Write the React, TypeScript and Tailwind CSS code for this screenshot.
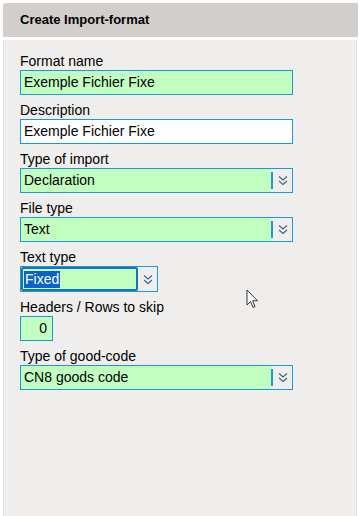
export default function App() {
  return (
    <div className="relative h-[516px] w-[359px] overflow-hidden bg-white font-['Liberation_Sans',Arial,sans-serif] text-[14px] text-black">
      {/* Title bar */}
      <div className="ml-[3px] mr-[1px] mt-[3px] flex h-[34px] items-center rounded-tl-[3px] bg-[#d1cecb] pl-[17px]">
        <span className="text-[13px] font-bold">Create Import-format</span>
      </div>

      {/* Form panel */}
      <div className="ml-[3px] mr-[2px] mt-[3px] h-[476px] border-l border-r border-[#e2e0de] bg-[#efeeec] pl-[16px] pt-[14px]">
        <Field label="Format name">
          <TextBox value="Exemple Fichier Fixe" />
        </Field>
        <Field label="Description">
          <TextBox value="Exemple Fichier Fixe" white />
        </Field>
        <Field label="Type of import">
          <Select value="Declaration" />
        </Field>
        <Field label="File type">
          <Select value="Text" />
        </Field>
        <Field label="Text type">
          <div className="flex h-[26px] w-[138px] border border-[#1a9ad6] bg-[#efeeec]">
            <div className="flex flex-1 items-center rounded-[2px] border-2 border-[#1f6fb8] bg-[#c0ffc0] pl-[1px]">
              <span className="bg-[#0a64c8] px-[1px] leading-[17px] text-white">Fixed</span>
            </div>
            <div className="flex w-[19px] items-center justify-center">
              <Chevrons />
            </div>
          </div>
        </Field>
        <Field label="Headers / Rows to skip">
          <div className="flex h-[25px] w-[33px] items-center justify-end border border-[#1a9ad6] bg-[#c0ffc0] pr-[5px]">
            0
          </div>
        </Field>
        <Field label="Type of good-code">
          <Select value="CN8 goods code" />
        </Field>
      </div>

      {/* mouse pointer */}
      <svg className="absolute left-[246px] top-[289px]" width="14" height="21" viewBox="0 0 14 21">
        <path d="M1 1 L1 16 L4.5 12.5 L7 18.5 L9 17.6 L6.6 11.8 L11.5 11.8 Z" fill="white" stroke="#333" strokeWidth="1" strokeLinejoin="round" />
      </svg>
    </div>
  )
}

function Field({ label, children }: { label: string; children: React.ReactNode }) {
  return (
    <div className="mb-[8px]">
      <div className="h-[16px] leading-[15px]">{label}</div>
      {children}
    </div>
  )
}

function TextBox({ value, white }: { value: string; white?: boolean }) {
  return (
    <div
      className={`flex h-[25px] w-[273px] items-center border border-[#1a9ad6] pl-[3px] ${white ? "bg-white" : "bg-[#c0ffc0]"}`}
    >
      {value}
    </div>
  )
}

function Select({ value }: { value: string }) {
  return (
    <div className="flex h-[25px] w-[273px] border border-[#1a9ad6] bg-[#efeeec]">
      <div className="flex flex-1 items-center bg-[#c0ffc0] pl-[3px]">{value}</div>
      <div className="my-[3px] w-[2px] bg-[#1a9ad6]" />
      <div className="flex w-[19px] items-center justify-center">
        <Chevrons />
      </div>
    </div>
  )
}

function Chevrons() {
  return (
    <svg width="10" height="11" viewBox="0 0 10 11" fill="none" stroke="#3b6286" strokeWidth="1.1">
      <path d="M1 1.5 L5 5 L9 1.5" />
      <path d="M1 6 L5 9.5 L9 6" />
    </svg>
  )
}
